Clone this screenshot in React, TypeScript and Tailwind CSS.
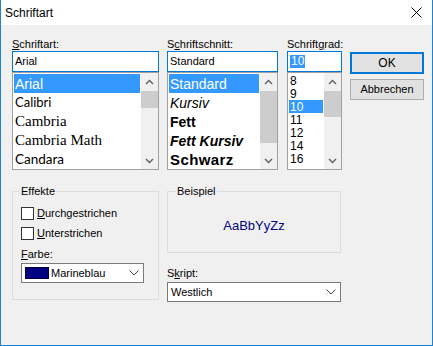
import React from "react";

const ui = { fontFamily: '"Liberation Sans", Arial, sans-serif' };

function Chevron({ up }: { up?: boolean }) {
  return (
    <svg width="9" height="6" viewBox="0 0 9 6" className="block">
      <path
        d={up ? "M1 5 L4.5 1.5 L8 5" : "M1 1 L4.5 4.5 L8 1"}
        fill="none"
        stroke="#606060"
        strokeWidth="1.4"
      />
    </svg>
  );
}

function ComboArrow() {
  return (
    <svg width="10" height="6" viewBox="0 0 10 6" className="block">
      <path d="M0.5 0.5 L5 5 L9.5 0.5" fill="none" stroke="#404040" strokeWidth="1" />
    </svg>
  );
}

function ScrollBar({ thumb }: { thumb: string }) {
  return (
    <div className="flex h-full w-[17px] shrink-0 flex-col bg-[#f0f0f0]">
      <div className="flex h-[17px] items-center justify-center">
        <Chevron up />
      </div>
      <div className="flex-1">
        <div className={`mt-[1px] w-full bg-[#cdcdcd] ${thumb}`} />
      </div>
      <div className="flex h-[17px] items-center justify-center">
        <Chevron />
      </div>
    </div>
  );
}

function Label({ pre, key1, post }: { pre: string; key1: string; post: string }) {
  return (
    <div className="h-[14px] text-[11px] leading-[14px] text-black">
      {pre}
      <span className="underline underline-offset-1">{key1}</span>
      {post}
    </div>
  );
}

type Item = { text: string; cls: string; font?: string };

const fonts: Item[] = [
  { text: "Arial", cls: "text-[14px]", font: '"Liberation Sans", sans-serif' },
  { text: "Calibri", cls: "text-[13px]", font: "Lato, sans-serif" },
  { text: "Cambria", cls: "text-[15px]", font: '"Liberation Serif", serif' },
  { text: "Cambria Math", cls: "text-[15px]", font: '"Liberation Serif", serif' },
  { text: "Candara", cls: "text-[13.5px]", font: "Lato, sans-serif" },
];

const styles: Item[] = [
  { text: "Standard", cls: "text-[14px]" },
  { text: "Kursiv", cls: "text-[14px] italic" },
  { text: "Fett", cls: "text-[14px] font-bold" },
  { text: "Fett Kursiv", cls: "text-[14px] font-bold italic" },
  { text: "Schwarz", cls: "text-[15px] font-black tracking-[0.4px]" },
];

const sizes = ["8", "9", "10", "11", "12", "14", "16"];

function Input({ children }: { children: React.ReactNode }) {
  return (
    <div className="flex h-[21px] items-center border border-[#0078d7] bg-white pl-[2px] text-[11px] text-black">
      {children}
    </div>
  );
}

export default function App() {
  return (
    <div
      className="flex h-[346px] w-[433px] flex-col border-x border-b border-[#1883d7] bg-[#f0f0f0]"
      style={ui}
    >
      {/* title bar */}
      <div className="flex h-[25px] shrink-0 items-center justify-between bg-white pl-[4px] pr-[10px]">
        <span className="text-[12px] text-black">Schriftart</span>
        <svg width="11" height="11" viewBox="0 0 11 11">
          <path d="M0.5 0.5 L10.5 10.5 M10.5 0.5 L0.5 10.5" stroke="#000" strokeWidth="1" />
        </svg>
      </div>

      <div className="flex flex-1 flex-col pl-[11px] pt-[12px]">
        {/* top row */}
        <div className="flex items-start">
          <div className="w-[147px]">
            <Label pre="" key1="S" post="chriftart:" />
            <Input>Arial</Input>
            <div className="flex h-[98px] border border-[#a0a0a0] bg-white">
              <div className="flex-1 pt-[1px]">
                {fonts.map((f, i) => (
                  <div
                    key={f.text}
                    className={`mx-[1px] flex h-[19px] items-center pl-[1px] leading-none ${f.cls} ${
                      i === 0 ? "bg-[#3399ff] text-white" : "text-black"
                    }`}
                    style={{ fontFamily: f.font }}
                  >
                    {f.text}
                  </div>
                ))}
              </div>
              <ScrollBar thumb="h-[17px]" />
            </div>
          </div>

          <div className="ml-[8px] w-[111px]">
            <Label pre="S" key1="c" post="hriftschnitt:" />
            <Input>Standard</Input>
            <div className="flex h-[98px] border border-[#a0a0a0] bg-white">
              <div className="flex-1 pt-[1px]">
                {styles.map((s, i) => (
                  <div
                    key={s.text}
                    className={`mx-[1px] flex h-[19px] items-center whitespace-nowrap pl-[1px] leading-none ${s.cls} ${
                      i === 0 ? "bg-[#3399ff] text-white" : "text-black"
                    }`}
                  >
                    {s.text}
                  </div>
                ))}
              </div>
              <ScrollBar thumb="h-[52px]" />
            </div>
          </div>

          <div className="ml-[9px] w-[55px]">
            <Label pre="Schrift" key1="g" post="rad:" />
            <Input>
              <span className="bg-[#3399ff] px-[1px] text-[12px] leading-[13px] text-white">10</span>
            </Input>
            <div className="flex h-[98px] border border-[#a0a0a0] bg-white">
              <div className="flex-1 pt-[1px]">
                {sizes.map((s) => (
                  <div
                    key={s}
                    className={`mx-[1px] flex h-[13px] items-center pl-[1px] text-[12px] leading-none ${
                      s === "10" ? "bg-[#3399ff] text-white" : "text-black"
                    }`}
                  >
                    {s}
                  </div>
                ))}
              </div>
              <ScrollBar thumb="h-[26px]" />
            </div>
          </div>

          <div className="ml-[8px] flex w-[74px] flex-col pt-[15px]">
            <button className="flex h-[22px] items-center justify-center border-2 border-[#0078d7] bg-[#e1e1e1] text-[12px] text-black">
              OK
            </button>
            <button className="mt-[5px] flex h-[21px] items-center justify-center border border-[#adadad] bg-[#e1e1e1] text-[11px] text-black">
              Abbrechen
            </button>
          </div>
        </div>

        {/* bottom row */}
        <div className="mt-[21px] flex items-start">
          <div className="relative h-[109px] w-[147px] border border-[#dcdcdc] pl-[8px] pt-[15px]">
            <span className="absolute -top-[8px] left-[7px] bg-[#f0f0f0] px-[1px] text-[11px] leading-[14px] text-black">
              Effekte
            </span>
            <div className="flex h-[13px] items-center">
              <div className="h-[13px] w-[13px] border border-[#333] bg-white" />
              <span className="ml-[3px] text-[11px] text-black">
                <span className="underline underline-offset-1">D</span>urchgestrichen
              </span>
            </div>
            <div className="mt-[7px] flex h-[13px] items-center">
              <div className="h-[13px] w-[13px] border border-[#333] bg-white" />
              <span className="ml-[3px] text-[11px] text-black">
                <span className="underline underline-offset-1">U</span>nterstrichen
              </span>
            </div>
            <div className="mt-[7px]">
              <Label pre="" key1="F" post="arbe:" />
            </div>
            <div className="mt-[2px] flex h-[20px] w-[123px] items-center border border-[#7a7a7a] bg-white pl-[3px] pr-[4px]">
              <div className="h-[12px] w-[24px] border border-[#000040] bg-[#000080]" />
              <span className="ml-[2px] text-[11px] text-black">Marineblau</span>
              <span className="ml-auto">
                <ComboArrow />
              </span>
            </div>
          </div>

          <div className="ml-[8px] flex w-[174px] flex-col">
            <div className="relative flex h-[62px] items-center justify-center border border-[#dcdcdc] pt-[7px]">
              <span className="absolute -top-[8px] left-[8px] bg-[#f0f0f0] px-[1px] text-[11px] leading-[14px] text-black">
                Beispiel
              </span>
              <span className="text-[13px] text-[#000080]">AaBbYyZz</span>
            </div>
            <div className="mt-[13px]">
              <Label pre="S" key1="k" post="ript:" />
            </div>
            <div className="mt-[2px] flex h-[20px] items-center border border-[#7a7a7a] bg-white pl-[3px] pr-[4px]">
              <span className="text-[11px] text-black">Westlich</span>
              <span className="ml-auto">
                <ComboArrow />
              </span>
            </div>
          </div>
        </div>
      </div>
    </div>
  );
}
